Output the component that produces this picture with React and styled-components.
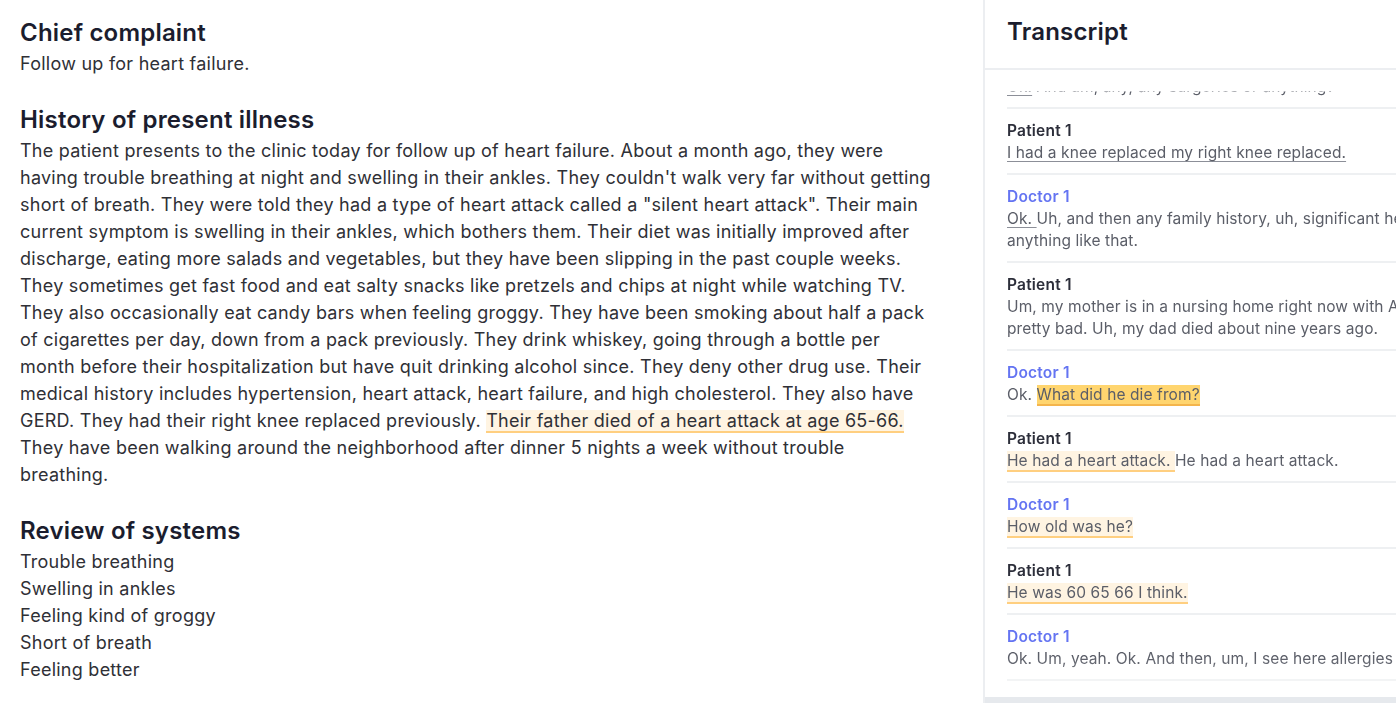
import React, { useLayoutEffect, useRef } from 'react';
import styled, { createGlobalStyle, css } from 'styled-components';

const GlobalStyle = createGlobalStyle`
  html, body {
    margin: 0;
    padding: 0;
    background: #ffffff;
  }
  body {
    font-family: "Inter", "Noto Sans", "Liberation Sans", sans-serif;
    -webkit-font-smoothing: antialiased;
  }
  * { box-sizing: border-box; }
`;

const Page = styled.div`
  display: flex;
  height: 100vh;
  width: 100vw;
  overflow: hidden;
`;

// ---- note side ----
const NotePanel = styled.main`
  width: 983px;
  flex-shrink: 0;
  padding: 16px 48px 0 20px;
  color: #2f3036;
`;

const Section = styled.section`
  margin-bottom: 26px;
`;

const Heading = styled.h2`
  margin: 0;
  font-size: 24px;
  line-height: 34px;
  font-weight: 600;
  color: #1b1d2e;
  letter-spacing: 0.2px;
`;

const textStyle = css`
  font-size: 18px;
  line-height: 27px;
  letter-spacing: 0.25px;
`;

const Body = styled.p`
  margin: 0;
  ${textStyle}
`;

const Lines = styled.ul`
  list-style: none;
  margin: 0;
  padding: 0;
  ${textStyle}
`;

const Mark = styled.span`
  ${({ $tone }) =>
    $tone === 'strong'
      ? css`
          background: #ffd56f;
          border-bottom: 2px solid #f4b54c;
        `
      : $tone === 'soft'
      ? css`
          background: #fff4e2;
          border-bottom: 2px solid #ffcf80;
        `
      : css`
          text-decoration: underline;
          text-decoration-color: #8c8f98;
          text-underline-offset: 3px;
          text-decoration-thickness: 1px;
        `}
`;

// ---- transcript side ----
const TranscriptPanel = styled.aside`
  width: 551px;
  flex-shrink: 0;
  display: flex;
  flex-direction: column;
  border-left: 2px solid #eceef1;
  height: 100vh;
`;

const PanelHeader = styled.header`
  height: 70px;
  flex-shrink: 0;
  display: flex;
  align-items: center;
  padding: 0 22px 6px 22px;
  border-bottom: 2px solid #eceef1;
  font-size: 24px;
  font-weight: 600;
  letter-spacing: 0.2px;
  color: #1b1d2e;
`;

const fade = `linear-gradient(
    to bottom,
    transparent 0,
    transparent 21px,
    #000 22px,
    #000 calc(100% - 40px),
    rgba(0, 0, 0, 0.55) 100%
  )`;

const Scroller = styled.div`
  flex: 1;
  overflow: hidden;
  -webkit-mask-image: ${fade};
  mask-image: ${fade};
`;

const TurnList = styled.div`
  padding: 0 22px 40px;
`;

const Turn = styled.div`
  padding: 11px 0 9px;
  border-bottom: 2px solid #eef0f2;
`;

const Speaker = styled.div`
  font-size: 15.5px;
  line-height: 22px;
  font-weight: 600;
  letter-spacing: 0.2px;
  color: ${({ $doctor }) => ($doctor ? '#6474f2' : '#2c2e3a')};
`;

const Utterance = styled.div`
  font-size: 15.5px;
  line-height: 22px;
  letter-spacing: 0.1px;
  color: #5b5e68;
`;

const Footer = styled.div`
  height: 6px;
  flex-shrink: 0;
  background: #e6e9ed;
`;

const turns = [
  { who: 'Doctor 1', doctor: true, parts: [['u', 'Ok.'], ['', ' And um, any, any surgeries or anything?']] },
  { who: 'Patient 1', parts: [['u', 'I had a knee replaced my right knee replaced.']] },
  {
    who: 'Doctor 1',
    doctor: true,
    parts: [['u', 'Ok. '], ['', 'Uh, and then any family history, uh, significant heart disease or anything like that.']],
  },
  {
    who: 'Patient 1',
    parts: [['', "Um, my mother is in a nursing home right now with Alzheimer's, pretty bad. Uh, my dad died about nine years ago."]],
  },
  { who: 'Doctor 1', doctor: true, parts: [['', 'Ok. '], ['strong', 'What did he die from?']] },
  { who: 'Patient 1', parts: [['soft', 'He had a heart attack. '], ['', 'He had a heart attack.']] },
  { who: 'Doctor 1', doctor: true, parts: [['soft', 'How old was he?']] },
  { who: 'Patient 1', parts: [['soft', 'He was 60 65 66 I think.']] },
  {
    who: 'Doctor 1',
    doctor: true,
    parts: [['', 'Ok. Um, yeah. Ok. And then, um, I see here allergies to penicillin.']],
  },
];

function Transcript() {
  const ref = useRef(null);
  useLayoutEffect(() => {
    if (ref.current) ref.current.scrollTop = 27;
  }, []);
  return (
    <TranscriptPanel>
      <PanelHeader>Transcript</PanelHeader>
      <Scroller ref={ref}>
        <TurnList>
          {turns.map((t, i) => (
            <Turn key={i}>
              <Speaker $doctor={t.doctor}>{t.who}</Speaker>
              <Utterance>
                {t.parts.map(([tone, text], j) =>
                  tone ? (
                    <Mark key={j} $tone={tone === 'u' ? undefined : tone}>
                      {text}
                    </Mark>
                  ) : (
                    <span key={j}>{text}</span>
                  )
                )}
              </Utterance>
            </Turn>
          ))}
        </TurnList>
      </Scroller>
      <Footer />
    </TranscriptPanel>
  );
}

const ros = ['Trouble breathing', 'Swelling in ankles', 'Feeling kind of groggy', 'Short of breath', 'Feeling better'];

export default function App() {
  return (
    <Page>
      <GlobalStyle />
      <NotePanel>
        <Section>
          <Heading>Chief complaint</Heading>
          <Body>Follow up for heart failure.</Body>
        </Section>
        <Section>
          <Heading>History of present illness</Heading>
          <Body>
            The patient presents to the clinic today for follow up of heart failure. About a month ago, they were
            having trouble breathing at night and swelling in their ankles. They couldn't walk very far without getting
            short of breath. They were told they had a type of heart attack called a "silent heart attack". Their main
            current symptom is swelling in their ankles, which bothers them. Their diet was initially improved after
            discharge, eating more salads and vegetables, but they have been slipping in the past couple weeks. They
            sometimes get fast food and eat salty snacks like pretzels and chips at night while watching TV. They also
            occasionally eat candy bars when feeling groggy. They have been smoking about half a pack of cigarettes per
            day, down from a pack previously. They drink whiskey, going through a bottle per month before their
            hospitalization but have quit drinking alcohol since. They deny other drug use. Their medical history
            includes hypertension, heart attack, heart failure, and high cholesterol. They also have GERD. They had
            their right knee replaced previously.{' '}
            <Mark $tone="soft">Their father died of a heart attack at age 65-66. </Mark>
            They have been walking around the neighborhood after dinner 5 nights a week without trouble breathing.
          </Body>
        </Section>
        <Section>
          <Heading>Review of systems</Heading>
          <Lines>
            {ros.map((r) => (
              <li key={r}>{r}</li>
            ))}
          </Lines>
        </Section>
      </NotePanel>
      <Transcript />
    </Page>
  );
}
